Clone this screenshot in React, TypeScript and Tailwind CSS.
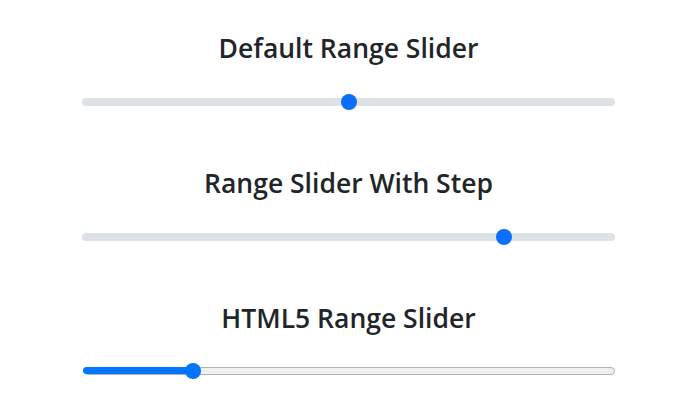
import React from "react";

function BsRange({ value }: { value: number }) {
  // bootstrap-style: thumb travels inside the track
  const left = `calc((100% - 16px) * ${value / 100})`;
  return (
    <div className="relative h-4 w-full">
      <div className="absolute left-0 right-0 top-1 h-2 rounded-full bg-[#dee2e6]" />
      <div className="absolute top-0 h-4 w-4 rounded-full bg-[#0d6efd]" style={{ left }} />
    </div>
  );
}

function NativeRange({ value }: { value: number }) {
  const pct = value / 100;
  return (
    <div className="relative h-4 w-full">
      <div className="absolute left-[2px] right-0 top-[3px] h-[8px] rounded-full border border-[#b2b2b2] bg-[#efefef]" />
      <div
        className="absolute left-[1px] top-[3px] h-[7px] rounded-full bg-[#0075ff]"
        style={{ width: `calc((100% - 16px) * ${pct} + 8px)` }}
      />
      <div
        className="absolute top-[-1px] h-4 w-4 rounded-full bg-[#0075ff]"
        style={{ left: `calc((100% - 16px) * ${pct})` }}
      />
    </div>
  );
}

export default function App() {
  const sections = [
    { title: "Default Range Slider", el: <BsRange value={50} /> },
    { title: "Range Slider With Step", el: <BsRange value={80} /> },
    { title: "HTML5 Range Slider", el: <NativeRange value={20} /> },
  ];

  return (
    <div className="flex h-[420px] w-[700px] flex-col items-center bg-white pt-[29px] pr-[3px] font-['Open_Sans',sans-serif] text-[#212529]">
      <div className="flex w-[533px] flex-col gap-[54px]">
        {sections.map((s, i) => (
          <div key={i} className="flex flex-col items-center gap-[27px]">
            <h3 className="text-[26.5px] leading-[38px] font-semibold">{s.title}</h3>
            {s.el}
          </div>
        ))}
      </div>
    </div>
  );
}
